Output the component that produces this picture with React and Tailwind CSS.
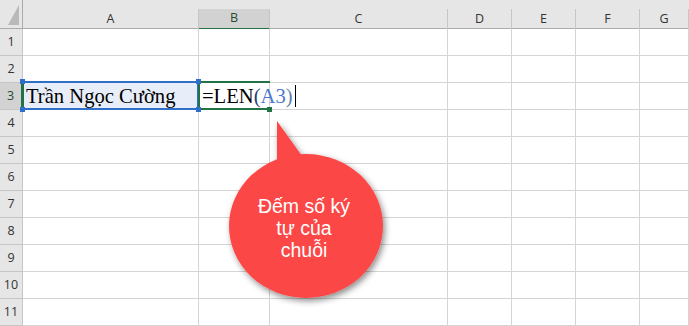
import React from 'react';

const cols = ['A', 'B', 'C', 'D', 'E', 'F', 'G'];
const rows = [1, 2, 3, 4, 5, 6, 7, 8, 9, 10, 11];
const gridCols = 'grid-cols-[23px_176px_71px_178px_64px_64px_64px_1fr]';

function HeaderRow() {
  return (
    <div className={`grid ${gridCols} h-[29px] bg-[#e6e6e6] border-b border-[#ababab]`}>
      <div className="relative border-r border-[#ababab]">
        <div className="absolute left-[8px] top-[5px] w-0 h-0 border-l-[11px] border-l-transparent border-b-[20px] border-b-[#b9b9b9]" />
      </div>
      {cols.map((c) => (
        <div key={c} className="flex flex-col">
          <div className="h-[9px]" />
          <div
            className={`flex-1 flex items-center justify-center text-[12.5px] border-r border-[#c6c6c6] ${
              c === 'B' ? 'bg-[#d2d2d2] text-[#1e4e33] border-b-2 border-b-[#217346] -mb-px' : 'text-[#333]'
            }`}
          >
            {c}
          </div>
        </div>
      ))}
    </div>
  );
}

function Row({ n }) {
  const active = n === 3;
  return (
    <div className={`grid ${gridCols} h-[27px]`}>
      <div
        className={`flex items-center justify-center text-[12.5px] border-b border-[#c6c6c6] ${
          active ? 'bg-[#d2d2d2] text-[#1e4e33] border-r-2 border-r-[#217346]' : 'bg-[#e6e6e6] text-[#333] border-r border-[#ababab]'
        }`}
      >
        {n}
      </div>
      {cols.map((c) => (
        <div
          key={c}
          className={`border-r border-b border-[#d4d4d4] ${active && c === 'A' ? 'bg-[#e8eef9]' : 'bg-white'}`}
        >
          {active && c === 'A' && (
            <div className="h-full flex items-end pl-[3px] pb-[1px] font-['Liberation_Serif',serif] text-[20.6px] leading-[24px] text-black whitespace-nowrap">
              Trần Ngọc Cường
            </div>
          )}
        </div>
      ))}
    </div>
  );
}

function Handle({ className }) {
  return <div className={`absolute w-[5px] h-[5px] bg-[#2f6fc9] ${className}`} />;
}

export default function App() {
  return (
    <div className="relative w-[689px] h-[326px] overflow-hidden bg-white font-['Open_Sans','Noto_Sans',sans-serif]">
      <HeaderRow />
      {rows.map((n) => (
        <Row key={n} n={n} />
      ))}

      {/* A3 selection */}
      <div className="absolute left-[22px] top-[81px] w-[177px] h-[29px] border-2 border-[#2f6fc9] border-l-[#217346]" />
      {/* B3 edit cell */}
      <div className="absolute left-[198px] top-[81px] w-[72px] h-[29px] border-y-2 border-l-2 border-[#217346]" />
      <div className="absolute left-[267px] top-[107px] w-[5px] h-[5px] bg-[#217346]" />
      <Handle className="left-[20px] top-[79px]" />
      <Handle className="left-[196px] top-[79px]" />
      <Handle className="left-[196px] top-[107px]" />
      <Handle className="left-[20px] top-[107px]" />

      {/* formula text */}
      <div className="absolute left-[202px] top-[83px] h-[26px] flex items-end pb-[1px] font-['Liberation_Serif',serif] text-[20.6px] leading-[24px] whitespace-nowrap">
        <span className="text-black">=LEN</span>
        <span className="text-[#243f73]">(</span>
        <span className="text-[#4a78c8]">A3</span>
        <span className="text-[#5f7fae]">)</span>
        <span className="inline-block w-px h-[22px] bg-black ml-[2px] mb-[1px]" />
      </div>

      {/* callout */}
      <svg className="absolute left-[225px] top-[118px]" width="175" height="200" viewBox="0 0 175 200">
        <defs>
          <filter id="sh" x="-20%" y="-20%" width="150%" height="150%">
            <feDropShadow dx="2" dy="3" stdDeviation="3" floodColor="#000" floodOpacity="0.45" />
          </filter>
        </defs>
        <g filter="url(#sh)" fill="#fc4647">
          <polygon points="52,3 52,50 77,38" />
          <ellipse cx="81" cy="108" rx="77" ry="72" />
        </g>
      </svg>
      <div className="absolute left-[224px] top-[195px] w-[160px] text-center text-white font-['Liberation_Sans',Arial,sans-serif] text-[19.5px] leading-[22px]">
        Đếm số ký
        <br />
        tự của
        <br />
        chuỗi
      </div>
    </div>
  );
}
